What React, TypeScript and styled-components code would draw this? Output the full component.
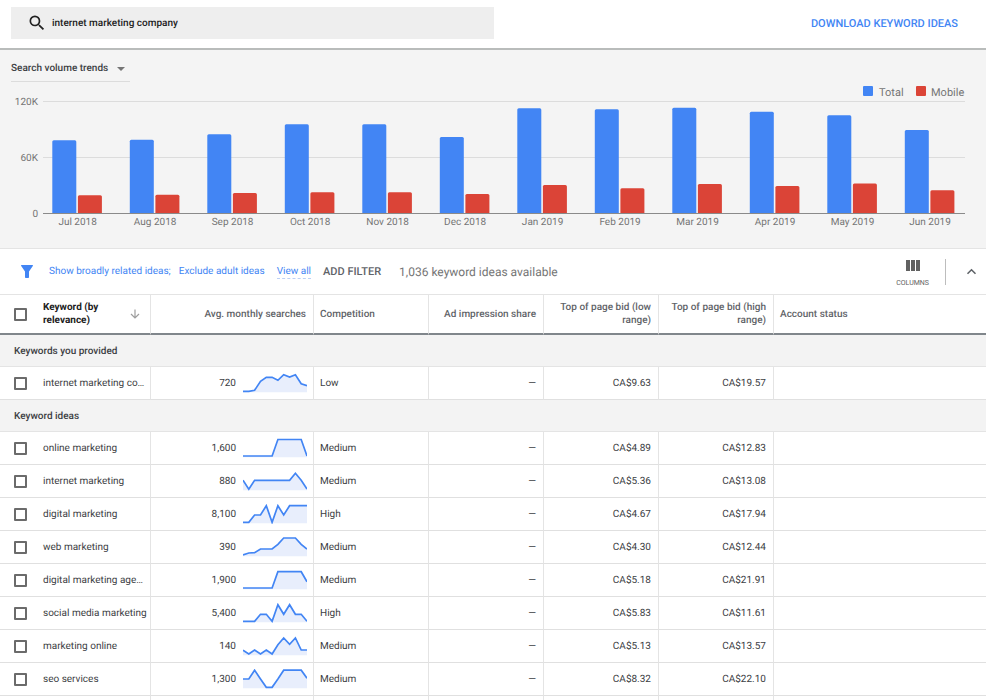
import React, { useState } from "react";
import styled, { createGlobalStyle } from "styled-components";

const GlobalStyle = createGlobalStyle`
  *, *::before, *::after { box-sizing: border-box; }
  body {
    margin: 0;
    background: #fff;
    color: #3c4043;
    font-family: Roboto, "Liberation Sans", sans-serif;
    font-size: 10px;
    text-rendering: geometricPrecision;
  }
  button, input, select { font-family: inherit; margin: 0; text-rendering: inherit; }
  button { padding: 0; border: 0; background: none; cursor: pointer; }
`;

const TopBar = styled.header`
  display: flex;
  align-items: center;
  justify-content: space-between;
  height: 50px;
  padding: 0 28px 2px 11px;
  border-bottom: 2px solid #b9bcbb;
`;

const SearchBox = styled.label`
  display: flex;
  align-items: center;
  gap: 5px;
  width: 51%;
  height: 32px;
  padding: 0 16px;
  background: #eee;
`;

const SearchInput = styled.input`
  flex: 1;
  min-width: 0;
  padding: 0;
  border: 0;
  outline: 0;
  background: transparent;
  color: #212121;
  font-size: 10px;
  font-weight: 500;
`;

const DownloadButton = styled.button`
  color: #4285f4;
  font-size: 11px;
  font-weight: 500;
`;

const TrendPanel = styled.section`
  padding: 6px 0 20px;
  background: #f4f4f4;
  border-bottom: 1px solid #e4e4e4;
`;

const TrendPicker = styled.div`
  display: inline-grid;
  align-items: center;
  margin-left: 11px;
  border-bottom: 1px solid #dcdcdc;

  > * { grid-area: 1 / 1; }
  > svg { justify-self: end; margin-right: 5px; pointer-events: none; }
`;

const TrendSelect = styled.select`
  appearance: none;
  width: 119px;
  height: 25px;
  padding: 0 13px 0 0;
  border: 0;
  outline: 0;
  background: transparent;
  color: #3c4043;
  font-size: 10px;
  font-weight: 500;
`;

const Chart = styled.svg`
  display: block;
  width: 100%;
  height: auto;
  font-size: 10px;
  fill: #757575;
`;

const LegendText = styled.text`
  font-size: 11px;
`;

const FilterBar = styled.section`
  display: flex;
  align-items: center;
  height: 45px;
  padding: 0 9px 0 21px;
  color: #5f6368;
`;

const FilterLinks = styled.div`
  display: flex;
  gap: 8px;
  margin-left: 16px;
`;

const FilterLink = styled.a`
  color: #4285f4;
  font-size: 10px;
  line-height: 13px;
  text-decoration: none;
`;

const ViewAll = styled(FilterLink)`
  margin-left: 4px;
  border-bottom: 1px dashed #bcd0f5;
`;

const AddFilter = styled.button`
  margin-left: 12px;
  color: #5f6368;
  font-size: 11px;
  font-weight: 500;
`;

const IdeaCount = styled.span`
  margin-left: 18px;
  color: #757575;
  font-size: 12px;
`;

const ColumnsButton = styled.button`
  display: grid;
  justify-items: center;
  gap: 9px;
  margin-left: auto;
  padding-top: 3px;
  color: #616161;
  font-size: 7px;
  line-height: 7px;
`;

const Divider = styled.span`
  width: 1px;
  height: 26px;
  margin: 0 20px 0 16px;
  background: #bdbdbd;
`;

const CollapseButton = styled.button`
  display: flex;
  color: #5f6368;
`;

const Table = styled.table`
  width: 100%;
  table-layout: fixed;
  border-collapse: separate;
  border-spacing: 0;
`;

const Col = styled.col<{ $width?: number }>`
  width: ${(p) => (p.$width ? `${p.$width}px` : "auto")};
`;

const HeadCell = styled.th<{ $right?: boolean; $strong?: boolean }>`
  height: 41px;
  padding: 0 7px 0 6px;
  border-top: 1px solid #e4e4e4;
  border-bottom: 2px solid #80868b;
  border-right: 1px solid #e4e4e4;
  color: ${(p) => (p.$strong ? "#212121" : "#5f6368")};
  font-size: 10px;
  font-weight: ${(p) => (p.$strong ? 700 : 500)};
  line-height: 13px;
  text-align: ${(p) => (p.$right ? "right" : "left")};
  &:last-child { border-right: 0; }
`;

const GroupCell = styled.th`
  height: 32px;
  padding: 2px 14px 0;
  border-bottom: 1px solid #e4e4e4;
  background: #f3f3f3;
  color: #3c4043;
  font-size: 10px;
  font-weight: 500;
  text-align: left;
`;

const Cell = styled.td<{ $right?: boolean }>`
  height: 33px;
  padding: 1px 7px 0 6px;
  border-right: 1px solid #e4e4e4;
  border-bottom: 1px solid #e0e0e0;
  font-size: 10px;
  text-align: ${(p) => (p.$right ? "right" : "left")};
  &:last-child { border-right: 0; }
`;

const KeywordCell = styled(Cell)`
  padding: 0 3px 0 6px;
`;

const SearchesCell = styled(Cell)`
  padding: 0 6px;
`;

const TailCell = styled.td`
  height: 5px;
  padding: 0;
  border-right: 1px solid #e4e4e4;
  &:last-child { border-right: 0; }
`;

const KeywordLine = styled.div`
  display: flex;
  align-items: center;
  gap: 16px;
  padding-left: 8px;
`;

const KeywordLabel = styled.label`
  flex: 1;
  white-space: nowrap;
`;

const HeadLabel = styled.label`
  width: 72px;
`;

const SortButton = styled.button`
  display: flex;
  margin-left: auto;
  margin-right: 3px;
  color: #9e9e9e;
`;

const Check = styled.input`
  appearance: none;
  flex: none;
  width: 13px;
  height: 13px;
  margin: 0;
  border: 2px solid #6b6b6b;
  border-radius: 1px;
  background: #fff;
  &:checked { background: #4285f4; border-color: #4285f4; }
`;

const Searches = styled.div`
  display: flex;
  align-items: center;
  justify-content: flex-end;
  gap: 7px;
`;

type Month = { label: string; total: number; mobile: number };

/* Volumes in thousands of searches. */
const months: Month[] = [
  { label: "Jul 2018", total: 78, mobile: 19 },
  { label: "Aug 2018", total: 78.6, mobile: 19.5 },
  { label: "Sep 2018", total: 84.5, mobile: 21.3 },
  { label: "Oct 2018", total: 95, mobile: 22.2 },
  { label: "Nov 2018", total: 95, mobile: 22.2 },
  { label: "Dec 2018", total: 81.4, mobile: 20.3 },
  { label: "Jan 2019", total: 112.2, mobile: 30 },
  { label: "Feb 2019", total: 111.1, mobile: 26.4 },
  { label: "Mar 2019", total: 112.9, mobile: 31 },
  { label: "Apr 2019", total: 108.4, mobile: 29 },
  { label: "May 2019", total: 104.6, mobile: 31.7 },
  { label: "Jun 2019", total: 89, mobile: 24.5 },
];

type Keyword = {
  name: string;
  searches: string;
  competition: string;
  low: string;
  high: string;
  trend: number[];
};

const provided: Keyword[] = [
  { name: "internet marketing co…", searches: "720", competition: "Low", low: "CA$9.63", high: "CA$19.57", trend: [18.3, 18.3, 17.3, 8.3, 4.3, 4.3, 7.3, 1.7, 4, 1.7, 10.7, 12.7] },
];

const ideas: Keyword[] = [
  { name: "online marketing", searches: "1,600", competition: "Medium", low: "CA$4.89", high: "CA$12.83", trend: [18, 18, 18, 18, 18, 18, 1.5, 1.5, 1.5, 1.5, 1.5, 18] },
  { name: "internet marketing", searches: "880", competition: "Medium", low: "CA$5.36", high: "CA$13.08", trend: [9.3, 18.3, 9.3, 9.3, 9.3, 9.3, 9.3, 9.3, 9.3, 2.3, 9.3, 18] },
  { name: "digital marketing", searches: "8,100", competition: "High", low: "CA$4.67", high: "CA$17.94", trend: [18.3, 18.3, 11, 11, 1.7, 18.3, 1.7, 11, 1.7, 1.7, 1.7, 1.7] },
  { name: "web marketing", searches: "390", competition: "Medium", low: "CA$4.30", high: "CA$12.44", trend: [18, 16, 15.7, 12, 12, 12, 7.3, 1, 1, 1, 7.3, 12] },
  { name: "digital marketing age…", searches: "1,900", competition: "Medium", low: "CA$5.18", high: "CA$21.91", trend: [18, 18, 18, 18, 18, 18, 1.7, 1.7, 1.7, 1.7, 1.7, 11.7] },
  { name: "social media marketing", searches: "5,400", competition: "High", low: "CA$5.83", high: "CA$11.61", trend: [18.3, 18.3, 18.3, 11.3, 11.3, 18.3, 1.7, 11.3, 1.7, 11.3, 11.3, 18.3] },
  { name: "marketing online", searches: "140", competition: "Medium", low: "CA$5.13", high: "CA$13.57", trend: [14.3, 18, 14, 18, 14, 18, 8.7, 2, 8.3, 2, 14, 14] },
  { name: "seo services", searches: "1,300", competition: "Medium", low: "CA$8.32", high: "CA$22.10", trend: [10, 10, 1.2, 10, 18.3, 18.3, 10, 1.2, 1.2, 1.2, 1.2, 9.3] },
];

const BASELINE = 131;
const PX_PER_K = 56 / 60;

function topRounded(x: number, width: number, value: number) {
  const top = BASELINE - value * PX_PER_K;
  return `M${x} ${BASELINE}V${top + 1.5}q0-1.5 1.5-1.5h${width - 3}q1.5 0 1.5 1.5V${BASELINE}z`;
}

function VolumeChart() {
  return (
    <Chart viewBox="0 0 986 146" role="img" aria-label="Search volume trends">
      <rect x="863" y="4" width="10" height="10" rx="1" fill="#4285f4" />
      <LegendText x="879" y="14">Total</LegendText>
      <rect x="916" y="4" width="10" height="10" rx="1" fill="#db4437" />
      <LegendText x="931" y="14">Mobile</LegendText>
      <path d="M43 19.500H965M43 75.500H965" stroke="#dcdcdc" fill="none" />
      <text x="38" y="23" textAnchor="end">120K</text>
      <text x="38" y="79" textAnchor="end">60K</text>
      <text x="38" y="135" textAnchor="end">0</text>
      {months.map((m, i) => {
        const x = 52.3 + i * 77.5;
        return (
          <g key={m.label}>
            <path d={topRounded(x, 24, m.total)} fill="#4285f4" />
            <path d={topRounded(x + 25.6, 24, m.mobile)} fill="#db4437" />
            <text x={x + 25.3} y="143" textAnchor="middle">{m.label}</text>
          </g>
        );
      })}
      <path d="M43 131.500H965" stroke="#8a8a8a" fill="none" />
    </Chart>
  );
}

function Sparkline({ values }: { values: number[] }) {
  const points = values.map((v, i) => `${(i * 5.82).toFixed(1)},${v}`).join(" ");
  return (
    <svg width="64" height="20" viewBox="0 0 64 20" aria-hidden="true">
      <polygon points={`0,19.300 ${points} 64,19.300`} fill="#e8eefc" />
      <polyline points={points} fill="none" stroke="#4285f4" strokeWidth="1.7" />
    </svg>
  );
}

function KeywordRow({ item, id }: { item: Keyword; id: string }) {
  return (
    <tr>
      <KeywordCell>
        <KeywordLine>
          <Check type="checkbox" id={id} />
          <KeywordLabel htmlFor={id}>{item.name}</KeywordLabel>
        </KeywordLine>
      </KeywordCell>
      <SearchesCell>
        <Searches>
          {item.searches}
          <Sparkline values={item.trend} />
        </Searches>
      </SearchesCell>
      <Cell>{item.competition}</Cell>
      <Cell $right>—</Cell>
      <Cell $right>{item.low}</Cell>
      <Cell $right>{item.high}</Cell>
      <Cell />
    </tr>
  );
}

export default function App() {
  const [query, setQuery] = useState("internet marketing company");
  return (
    <>
      <GlobalStyle />
      <TopBar>
        <SearchBox>
          <svg width="20" height="20" viewBox="0 0 24 24" fill="#212121" aria-hidden="true">
            <path d="M15.500 14h-.79l-.28-.27A6.471 6.471 0 0 0 16 9.500 6.500 6.500 0 1 0 9.500 16c1.610 0 3.090-.59 4.230-1.570l.27.28v.79l5 4.990L20.490 19l-4.990-5zm-6 0C7.010 14 5 11.990 5 9.500S7.010 5 9.500 5 14 7.010 14 9.500 11.990 14 9.500 14z" />
          </svg>
          <SearchInput type="text" aria-label="Search keywords" value={query} onChange={(e) => setQuery(e.target.value)} />
        </SearchBox>
        <DownloadButton type="button">DOWNLOAD KEYWORD IDEAS</DownloadButton>
      </TopBar>

      <TrendPanel>
        <TrendPicker>
          <TrendSelect aria-label="Chart type">
            <option>Search volume trends</option>
          </TrendSelect>
          <svg width="8" height="4" viewBox="0 0 8 4" fill="#757575" aria-hidden="true">
            <path d="M0 0h8L4 4z" />
          </svg>
        </TrendPicker>
        <VolumeChart />
      </TrendPanel>

      <FilterBar>
        <svg width="12" height="13" viewBox="0 0 12 13" fill="#4285f4" aria-hidden="true">
          <path d="M.5 0h11q.8.2.3 1L8 6.500v5.700q0 .8-.8.8H4.800Q4 13 4 12.200V6.500L.2 1Q-.3.2.5 0z" />
        </svg>
        <FilterLinks>
          <FilterLink href="#related">Show broadly related ideas;</FilterLink>
          <FilterLink href="#adult">Exclude adult ideas</FilterLink>
          <ViewAll href="#all">View all</ViewAll>
        </FilterLinks>
        <AddFilter type="button">ADD FILTER</AddFilter>
        <IdeaCount>1,036 keyword ideas available</IdeaCount>
        <ColumnsButton type="button">
          <svg width="14" height="11" viewBox="0 0 14 11" fill="currentColor" aria-hidden="true">
            <path d="M0 0h4v11H0zM5 0h4v11H5zM10 0h4v11h-4z" />
          </svg>
          COLUMNS
        </ColumnsButton>
        <Divider />
        <CollapseButton type="button" aria-label="Collapse">
          <svg width="11" height="7" viewBox="0 0 11 7" fill="none" stroke="currentColor" strokeWidth="1.6" aria-hidden="true">
            <path d="M1.500 5.800l4-4 4 4" />
          </svg>
        </CollapseButton>
      </FilterBar>

      <Table>
        <colgroup>
          <Col $width={151} />
          <Col $width={163} />
          <Col $width={115} />
          <Col $width={115} />
          <Col $width={115} />
          <Col $width={115} />
          <Col />
        </colgroup>
        <thead>
          <tr>
            <HeadCell scope="col" $strong>
              <KeywordLine>
                <Check type="checkbox" id="select-all" />
                <HeadLabel htmlFor="select-all">Keyword (by relevance)</HeadLabel>
                <SortButton type="button" aria-label="Sort by relevance">
                  <svg width="10" height="10" viewBox="0 0 10 10" fill="none" stroke="currentColor" strokeWidth="1.200" aria-hidden="true">
                    <path d="M5 .5v8.300M1 5l4 4 4-4" />
                  </svg>
                </SortButton>
              </KeywordLine>
            </HeadCell>
            <HeadCell scope="col" $right>Avg. monthly searches</HeadCell>
            <HeadCell scope="col">Competition</HeadCell>
            <HeadCell scope="col" $right>Ad impression share</HeadCell>
            <HeadCell scope="col" $right>Top of page bid (low range)</HeadCell>
            <HeadCell scope="col" $right>Top of page bid (high range)</HeadCell>
            <HeadCell scope="col">Account status</HeadCell>
          </tr>
        </thead>
        <tbody>
          <tr><GroupCell colSpan={7} scope="rowgroup">Keywords you provided</GroupCell></tr>
          {provided.map((k, i) => <KeywordRow key={k.name} id={`provided-${i}`} item={k} />)}
          <tr><GroupCell colSpan={7} scope="rowgroup">Keyword ideas</GroupCell></tr>
          {ideas.map((k, i) => <KeywordRow key={k.name} id={`idea-${i}`} item={k} />)}
          <tr aria-hidden="true">
            <TailCell /><TailCell /><TailCell /><TailCell /><TailCell /><TailCell /><TailCell />
          </tr>
        </tbody>
      </Table>
    </>
  );
}
